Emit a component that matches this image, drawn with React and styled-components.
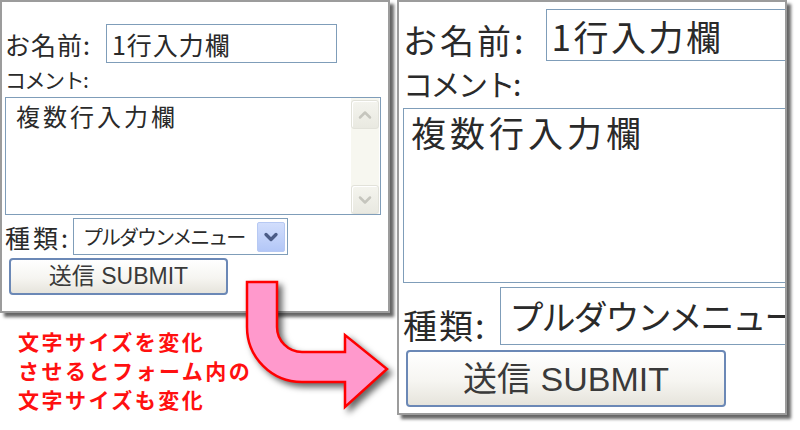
import React from "react";
import styled, { createGlobalStyle } from "styled-components";
import { ChevronDown, ChevronUp } from "lucide-react";

const GlobalStyle = createGlobalStyle`
  html, body {
    margin: 0;
    padding: 0;
    background: #ffffff;
  }
`;

const FONT = `"Noto Sans CJK JP", "Noto Sans", sans-serif`;

const small = {
  height: 313,
  padTop: 22,
  padLeft: 3,
  labelFont: 25,
  labelSpacing: 1,
  namePad: 6,
  nameGap: 15,
  inputW: 231,
  inputH: 39,
  inputFont: 25,
  inputSpacing: 1,
  inputPadX: 5,
  commentFont: 21,
  commentSpacing: -1.5,
  commentLH: 32,
  commentMB: 2,
  areaW: 376,
  areaH: 118,
  areaFont: 24,
  areaSpacing: 3,
  areaPad: "4px 10px",
  scroll: true,
  kindSpacing: 3,
  kindPad: 5,
  kindGap: 2,
  selMT: 3,
  selW: 215,
  selH: 37,
  selFont: 20,
  selSpacing: -2,
  selPadX: 9,
  dropBtn: true,
  btnMT: 3,
  btnML: 4,
  btnW: 219,
  btnH: 37,
  btnFont: 23,
};

const large = {
  height: 415,
  padTop: 7,
  padLeft: 4,
  labelFont: 34,
  labelSpacing: 3,
  namePad: 4,
  nameGap: 20,
  inputW: 300,
  inputH: 52,
  inputFont: 35,
  inputSpacing: 2.5,
  inputPadX: 4,
  commentFont: 30,
  commentSpacing: -2.5,
  commentLH: 44,
  commentMB: 3,
  areaW: 420,
  areaH: 175,
  areaFont: 35,
  areaSpacing: 4,
  areaPad: "2px 7px",
  scroll: false,
  kindSpacing: 2,
  kindPad: 3,
  kindGap: 14,
  selMT: 4,
  selW: 400,
  selH: 58,
  selFont: 34,
  selSpacing: -2,
  selPadX: 8,
  dropBtn: false,
  btnMT: 5,
  btnML: 3,
  btnW: 320,
  btnH: 57,
  btnFont: 34,
};

const Stage = styled.div`
  position: relative;
  width: 800px;
  height: 430px;
  overflow: hidden;
  display: flex;
  align-items: flex-start;
  background: #ffffff;
`;

const LeftColumn = styled.div`
  display: flex;
  flex-direction: column;
  width: 390px;
`;

const Panel = styled.div`
  box-sizing: border-box;
  width: 390px;
  height: ${({ $s }) => $s.height}px;
  margin-left: ${({ $ml }) => $ml || 0}px;
  padding: ${({ $s }) => `${$s.padTop}px 0 0 ${$s.padLeft}px`};
  background: #ffffff;
  border: 2px solid #9c9c9c;
  box-shadow: 4px 4px 3px rgba(0, 0, 0, 0.6);
  overflow: hidden;
  display: flex;
  flex-direction: column;
  align-items: flex-start;
  font-family: ${FONT};
  color: #2a2a2a;
`;

const Row = styled.div`
  display: flex;
  align-items: flex-end;
  flex-shrink: 0;
  margin-top: ${({ $mt }) => $mt || 0}px;
`;

const Label = styled.span`
  font-size: ${({ $s }) => $s.labelFont}px;
  letter-spacing: ${({ $sp }) => $sp}px;
  line-height: 1;
  padding-bottom: ${({ $pb }) => $pb}px;
  margin-right: ${({ $gap }) => $gap}px;
  white-space: nowrap;
`;

const CommentLabel = styled.div`
  font-size: ${({ $s }) => $s.commentFont}px;
  letter-spacing: ${({ $s }) => $s.commentSpacing}px;
  line-height: ${({ $s }) => $s.commentLH}px;
  height: ${({ $s }) => $s.commentLH}px;
  margin-bottom: ${({ $s }) => $s.commentMB}px;
  white-space: nowrap;
`;

const TextInput = styled.input`
  box-sizing: border-box;
  flex-shrink: 0;
  width: ${({ $s }) => $s.inputW}px;
  height: ${({ $s }) => $s.inputH}px;
  padding: 0 ${({ $s }) => $s.inputPadX}px;
  border: 1px solid #7f9db9;
  outline: none;
  font-family: ${FONT};
  font-size: ${({ $s }) => $s.inputFont}px;
  letter-spacing: ${({ $s }) => $s.inputSpacing}px;
  color: #2a2a2a;
  background: #ffffff;
`;

const AreaBox = styled.div`
  box-sizing: border-box;
  flex-shrink: 0;
  width: ${({ $s }) => $s.areaW}px;
  height: ${({ $s }) => $s.areaH}px;
  border: 1px solid #7f9db9;
  display: flex;
  background: #ffffff;
`;

const AreaText = styled.textarea`
  flex: 1;
  border: none;
  outline: none;
  resize: none;
  overflow: hidden;
  margin: 0;
  padding: ${({ $s }) => $s.areaPad};
  font-family: ${FONT};
  font-size: ${({ $s }) => $s.areaFont}px;
  letter-spacing: ${({ $s }) => $s.areaSpacing}px;
  line-height: 1.2;
  color: #2a2a2a;
  background: transparent;
`;

const Scrollbar = styled.div`
  width: 28px;
  margin-right: 1px;
  display: flex;
  flex-direction: column;
  justify-content: space-between;
  padding: 2px 0 0;
  background: #f7f7f0;
`;

const ScrollButton = styled.div`
  box-sizing: border-box;
  height: 29px;
  display: flex;
  align-items: center;
  justify-content: center;
  border: 1px solid #e2e2da;
  border-radius: 3px;
  background: linear-gradient(#f4f4ee, #e9e9e1);
  box-shadow: inset 1px 1px 0 #ffffff;
  color: #c5c5bd;
`;

const SelectBox = styled.div`
  box-sizing: border-box;
  flex-shrink: 0;
  width: ${({ $s }) => $s.selW}px;
  height: ${({ $s }) => $s.selH}px;
  border: 1px solid #7f9db9;
  display: flex;
  align-items: center;
  padding-left: ${({ $s }) => $s.selPadX}px;
  padding-right: 2px;
  background: #ffffff;
`;

const SelectText = styled.span`
  flex: 1;
  font-size: ${({ $s }) => $s.selFont}px;
  letter-spacing: ${({ $s }) => $s.selSpacing}px;
  line-height: 1;
  white-space: nowrap;
`;

const DropButton = styled.div`
  box-sizing: border-box;
  width: 28px;
  height: 30px;
  display: flex;
  align-items: center;
  justify-content: center;
  border: 1px solid #b7c9f3;
  border-radius: 2px;
  background: linear-gradient(#d2defc, #b3c7f7);
  color: #4b5c86;
`;

const SubmitButton = styled.button`
  box-sizing: border-box;
  flex-shrink: 0;
  margin-top: ${({ $s }) => $s.btnMT}px;
  margin-left: ${({ $s }) => $s.btnML}px;
  width: ${({ $s }) => $s.btnW}px;
  height: ${({ $s }) => $s.btnH}px;
  padding: 0;
  border: 2px solid #6b88b6;
  border-radius: 4px;
  background: linear-gradient(#ffffff 0%, #f6f5f1 55%, #e6e4dc 100%);
  font-family: "Liberation Sans", "Noto Sans CJK JP", sans-serif;
  font-size: ${({ $s }) => $s.btnFont}px;
  color: #3a3a3a;
  line-height: 1;
`;

const Caption = styled.div`
  margin: 14px 0 0 18px;
  font-family: ${FONT};
  font-weight: 700;
  font-size: 21px;
  letter-spacing: 2.5px;
  line-height: 29px;
  color: #ff1010;
  text-shadow: 0 0 2px #ffffff;
  white-space: nowrap;
`;

const Arrow = styled.svg`
  position: absolute;
  left: 230px;
  top: 270px;
  width: 170px;
  height: 150px;
  overflow: visible;
  filter: drop-shadow(4px 4px 3px rgba(0, 0, 0, 0.6));
`;

const Form = ({ s, ml }) => (
  <Panel $s={s} $ml={ml}>
    <Row>
      <Label $s={s} $sp={s.labelSpacing} $pb={s.namePad} $gap={s.nameGap}>
        お名前:
      </Label>
      <TextInput $s={s} readOnly defaultValue="1行入力欄" />
    </Row>
    <CommentLabel $s={s}>コメント:</CommentLabel>
    <AreaBox $s={s}>
      <AreaText $s={s} readOnly defaultValue="複数行入力欄" />
      {s.scroll && (
        <Scrollbar>
          <ScrollButton>
            <ChevronUp size={20} strokeWidth={3} />
          </ScrollButton>
          <ScrollButton>
            <ChevronDown size={20} strokeWidth={3} />
          </ScrollButton>
        </Scrollbar>
      )}
    </AreaBox>
    <Row $mt={s.selMT}>
      <Label $s={s} $sp={s.kindSpacing} $pb={s.kindPad} $gap={s.kindGap}>
        種類:
      </Label>
      <SelectBox $s={s}>
        <SelectText $s={s}>プルダウンメニュー</SelectText>
        {s.dropBtn && (
          <DropButton>
            <ChevronDown size={20} strokeWidth={4} />
          </DropButton>
        )}
      </SelectBox>
    </Row>
    <SubmitButton $s={s}>送信 SUBMIT</SubmitButton>
  </Panel>
);

export default function App() {
  return (
    <>
      <GlobalStyle />
      <Stage>
        <LeftColumn>
          <Form s={small} />
          <Caption>
            文字サイズを変化
            <br />
            させるとフォーム内の
            <br />
            文字サイズも変化
          </Caption>
        </LeftColumn>
        <Form s={large} ml={7} />
        <Arrow viewBox="0 0 170 150">
          <path
            d="M17,12 H47 V57 A25,25 0 0 0 72,82 H115 V65 L157,99 L115,137 V112 H72 A55,55 0 0 1 17,57 Z"
            fill="#ff99cc"
            stroke="#ff0000"
            strokeWidth="2.5"
            strokeLinejoin="miter"
          />
        </Arrow>
      </Stage>
    </>
  );
}
